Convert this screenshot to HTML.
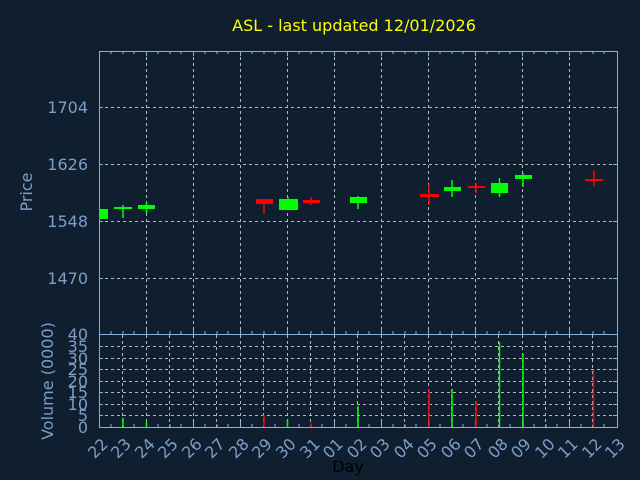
<!DOCTYPE html>
<html><head><meta charset="utf-8"><style>
html,body{margin:0;padding:0;background:#0f1f30;}
svg{display:block;font-family:"DejaVu Sans","Liberation Sans",sans-serif;}
</style></head><body>
<svg width="640" height="480" viewBox="0 0 640 480" xmlns="http://www.w3.org/2000/svg">
<rect width="640" height="480" fill="#0f1f30"/>
<text x="354" y="31" fill="#ffff00" font-size="16" text-anchor="middle">ASL - last updated 12/01/2026</text>
<g stroke="#b8b8b8" stroke-width="1" stroke-dasharray="3,3">
<line x1="99" y1="107.5" x2="617" y2="107.5"/>
<line x1="99" y1="164.5" x2="617" y2="164.5"/>
<line x1="99" y1="221.5" x2="617" y2="221.5"/>
<line x1="99" y1="278.5" x2="617" y2="278.5"/>
<line x1="146.5" y1="51" x2="146.5" y2="334"/><line x1="193.5" y1="51" x2="193.5" y2="334"/><line x1="240.5" y1="51" x2="240.5" y2="334"/><line x1="287.5" y1="51" x2="287.5" y2="334"/><line x1="334.5" y1="51" x2="334.5" y2="334"/><line x1="381.5" y1="51" x2="381.5" y2="334"/><line x1="428.5" y1="51" x2="428.5" y2="334"/><line x1="475.5" y1="51" x2="475.5" y2="334"/><line x1="522.5" y1="51" x2="522.5" y2="334"/><line x1="569.5" y1="51" x2="569.5" y2="334"/>
<line x1="99" y1="346.5" x2="617" y2="346.5"/><line x1="99" y1="358.5" x2="617" y2="358.5"/><line x1="99" y1="369.5" x2="617" y2="369.5"/><line x1="99" y1="381.5" x2="617" y2="381.5"/><line x1="99" y1="392.5" x2="617" y2="392.5"/><line x1="99" y1="404.5" x2="617" y2="404.5"/><line x1="99" y1="415.5" x2="617" y2="415.5"/>
<line x1="122.5" y1="335" x2="122.5" y2="427"/><line x1="146.5" y1="335" x2="146.5" y2="427"/><line x1="169.5" y1="335" x2="169.5" y2="427"/><line x1="193.5" y1="335" x2="193.5" y2="427"/><line x1="216.5" y1="335" x2="216.5" y2="427"/><line x1="240.5" y1="335" x2="240.5" y2="427"/><line x1="263.5" y1="335" x2="263.5" y2="427"/><line x1="287.5" y1="335" x2="287.5" y2="427"/><line x1="310.5" y1="335" x2="310.5" y2="427"/><line x1="334.5" y1="335" x2="334.5" y2="427"/><line x1="357.5" y1="335" x2="357.5" y2="427"/><line x1="381.5" y1="335" x2="381.5" y2="427"/><line x1="404.5" y1="335" x2="404.5" y2="427"/><line x1="428.5" y1="335" x2="428.5" y2="427"/><line x1="451.5" y1="335" x2="451.5" y2="427"/><line x1="475.5" y1="335" x2="475.5" y2="427"/><line x1="498.5" y1="335" x2="498.5" y2="427"/><line x1="522.5" y1="335" x2="522.5" y2="427"/><line x1="545.5" y1="335" x2="545.5" y2="427"/><line x1="569.5" y1="335" x2="569.5" y2="427"/><line x1="592.5" y1="335" x2="592.5" y2="427"/>
</g>
<g fill="none" stroke="#8ab0dc" stroke-width="1">
<rect x="99.5" y="51.5" width="518" height="283"/>
<rect x="99.5" y="334.5" width="518" height="93"/>
<path d="M111,51v3M123,51v3M134,51v3M146.5,51v5M158,51v3M170,51v3M181,51v3M193.5,51v5M205,51v3M217,51v3M228,51v3M240.5,51v5M252,51v3M264,51v3M275,51v3M287.5,51v5M299,51v3M311,51v3M322,51v3M334.5,51v5M346,51v3M358,51v3M369,51v3M381.5,51v5M393,51v3M405,51v3M416,51v3M428.5,51v5M440,51v3M452,51v3M463,51v3M475.5,51v5M487,51v3M499,51v3M510,51v3M522.5,51v5M534,51v3M546,51v3M557,51v3M569.5,51v5M581,51v3M593,51v3M604,51v3"/>
<path d="M111,334v-3M123,334v-3M134,334v-3M146.5,334v-5M158,334v-3M170,334v-3M181,334v-3M193.5,334v-5M205,334v-3M217,334v-3M228,334v-3M240.5,334v-5M252,334v-3M264,334v-3M275,334v-3M287.5,334v-5M299,334v-3M311,334v-3M322,334v-3M334.5,334v-5M346,334v-3M358,334v-3M369,334v-3M381.5,334v-5M393,334v-3M405,334v-3M416,334v-3M428.5,334v-5M440,334v-3M452,334v-3M463,334v-3M475.5,334v-5M487,334v-3M499,334v-3M510,334v-3M522.5,334v-5M534,334v-3M546,334v-3M557,334v-3M569.5,334v-5M581,334v-3M593,334v-3M604,334v-3"/>
<path d="M111,427v-3M123,427v-3M134,427v-3M146.5,427v-5M158,427v-3M170,427v-3M181,427v-3M193.5,427v-5M205,427v-3M217,427v-3M228,427v-3M240.5,427v-5M252,427v-3M264,427v-3M275,427v-3M287.5,427v-5M299,427v-3M311,427v-3M322,427v-3M334.5,427v-5M346,427v-3M358,427v-3M369,427v-3M381.5,427v-5M393,427v-3M405,427v-3M416,427v-3M428.5,427v-5M440,427v-3M452,427v-3M463,427v-3M475.5,427v-5M487,427v-3M499,427v-3M510,427v-3M522.5,427v-5M534,427v-3M546,427v-3M557,427v-3M569.5,427v-5M581,427v-3M593,427v-3M604,427v-3"/>
<path d="M99,107.5h4M99,164.5h4M99,221.5h4M99,278.5h4M617,107.5h-4M617,164.5h-4M617,221.5h-4M617,278.5h-4"/>
<path d="M99,346.5h4M99,358.5h4M99,369.5h4M99,381.5h4M99,392.5h4M99,404.5h4M99,415.5h4M617,346.5h-4M617,358.5h-4M617,369.5h-4M617,381.5h-4M617,392.5h-4M617,404.5h-4M617,415.5h-4"/>
</g>
<g stroke-width="1.5">
<rect x="99" y="209" width="9" height="10" fill="#00ff00"/>
<line x1="123" y1="205" x2="123" y2="218" stroke="#00ff00"/><rect x="114" y="207" width="18" height="2" fill="#00ff00"/>
<line x1="146.5" y1="202" x2="146.5" y2="213" stroke="#00ff00"/><rect x="138" y="205" width="17" height="4" fill="#00ff00"/>
<line x1="264" y1="199" x2="264" y2="214" stroke="#ff0000"/><rect x="256" y="199" width="17" height="5" fill="#ff0000"/>
<line x1="288" y1="197" x2="288" y2="210" stroke="#00ff00"/><rect x="279" y="199" width="19" height="11" fill="#00ff00"/>
<line x1="311" y1="197" x2="311" y2="205" stroke="#ff0000"/><rect x="303" y="200" width="17" height="3" fill="#ff0000"/>
<line x1="358" y1="196" x2="358" y2="209" stroke="#00ff00"/><rect x="350" y="197" width="17" height="6" fill="#00ff00"/>
<line x1="429" y1="184" x2="429" y2="205" stroke="#ff0000"/><rect x="420" y="194" width="19" height="3" fill="#ff0000"/>
<line x1="452" y1="180" x2="452" y2="197" stroke="#00ff00"/><rect x="444" y="187" width="17" height="4" fill="#00ff00"/>
<line x1="476" y1="183" x2="476" y2="193" stroke="#ff0000"/><rect x="468" y="186" width="17" height="2" fill="#ff0000"/>
<line x1="499.5" y1="178" x2="499.5" y2="197" stroke="#00ff00"/><rect x="491" y="183" width="17" height="10" fill="#00ff00"/>
<line x1="523" y1="173" x2="523" y2="187" stroke="#00ff00"/><rect x="515" y="175" width="17" height="4" fill="#00ff00"/>
<line x1="594" y1="170" x2="594" y2="186" stroke="#ff0000"/><rect x="585" y="179" width="18" height="2" fill="#ff0000"/>
</g>
<g stroke-width="1.5">
<line x1="123" y1="418" x2="123" y2="427" stroke="#00ff00"/>
<line x1="146.5" y1="422" x2="146.5" y2="427" stroke="#00ff00"/>
<line x1="264" y1="415" x2="264" y2="427" stroke="#ff0000"/>
<line x1="287.5" y1="420" x2="287.5" y2="427" stroke="#00ff00"/>
<line x1="311" y1="423" x2="311" y2="427" stroke="#ff0000"/>
<line x1="358" y1="406" x2="358" y2="427" stroke="#00ff00"/>
<line x1="429" y1="389" x2="429" y2="427" stroke="#ff0000"/>
<line x1="452" y1="389" x2="452" y2="427" stroke="#00ff00"/>
<line x1="476" y1="401" x2="476" y2="427" stroke="#ff0000"/>
<line x1="499.5" y1="342" x2="499.5" y2="427" stroke="#00ff00"/>
<line x1="523" y1="354" x2="523" y2="427" stroke="#00ff00"/>
<line x1="593.5" y1="370" x2="593.5" y2="427" stroke="#ff0000"/>
</g>
<g fill="#7b9fc8" font-size="16" text-anchor="end">
<text x="88" y="113">1704</text><text x="88" y="170">1626</text><text x="88" y="227">1548</text><text x="88" y="284">1470</text>
<text x="88" y="340">40</text><text x="88" y="352">35</text><text x="88" y="364">30</text><text x="88" y="375">25</text><text x="88" y="387">20</text><text x="88" y="398">15</text><text x="88" y="410">10</text><text x="88" y="421">5</text><text x="88" y="433">0</text>
</g>
<text transform="translate(32,192) rotate(-90)" fill="#7b9fc8" font-size="16" text-anchor="middle">Price</text>
<text transform="translate(53,381) rotate(-90)" fill="#7b9fc8" font-size="16" text-anchor="middle">Volume (0000)</text>
<g fill="#7b9fc8" font-size="16" text-anchor="end">
<text transform="translate(109,445) rotate(-45)">22</text>
<text transform="translate(132,445) rotate(-45)">23</text>
<text transform="translate(156,445) rotate(-45)">24</text>
<text transform="translate(179,445) rotate(-45)">25</text>
<text transform="translate(203,445) rotate(-45)">26</text>
<text transform="translate(226,445) rotate(-45)">27</text>
<text transform="translate(250,445) rotate(-45)">28</text>
<text transform="translate(273,445) rotate(-45)">29</text>
<text transform="translate(297,445) rotate(-45)">30</text>
<text transform="translate(321,445) rotate(-45)">31</text>
<text transform="translate(344,445) rotate(-45)">01</text>
<text transform="translate(368,445) rotate(-45)">02</text>
<text transform="translate(391,445) rotate(-45)">03</text>
<text transform="translate(415,445) rotate(-45)">04</text>
<text transform="translate(438,445) rotate(-45)">05</text>
<text transform="translate(462,445) rotate(-45)">06</text>
<text transform="translate(485,445) rotate(-45)">07</text>
<text transform="translate(509,445) rotate(-45)">08</text>
<text transform="translate(532,445) rotate(-45)">09</text>
<text transform="translate(556,445) rotate(-45)">10</text>
<text transform="translate(579,445) rotate(-45)">11</text>
<text transform="translate(603,445) rotate(-45)">12</text>
<text transform="translate(626,445) rotate(-45)">13</text>
</g>
<text x="348" y="472" fill="#000000" font-size="16" text-anchor="middle">Day</text>
</svg>
</body></html>
